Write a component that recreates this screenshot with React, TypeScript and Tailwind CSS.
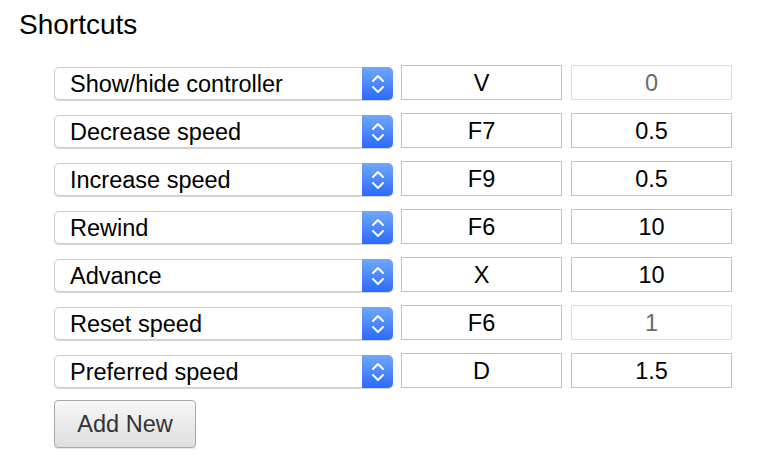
import React from 'react'

const rows = [
  { action: 'Show/hide controller', key: 'V', value: '0', disabled: true },
  { action: 'Decrease speed', key: 'F7', value: '0.5', disabled: false },
  { action: 'Increase speed', key: 'F9', value: '0.5', disabled: false },
  { action: 'Rewind', key: 'F6', value: '10', disabled: false },
  { action: 'Advance', key: 'X', value: '10', disabled: false },
  { action: 'Reset speed', key: 'F6', value: '1', disabled: true },
  { action: 'Preferred speed', key: 'D', value: '1.5', disabled: false },
]

function Chevrons() {
  return (
    <svg width="14" height="22" viewBox="0 0 14 22" fill="none">
      <path d="M2 8L7 3L12 8" stroke="white" strokeWidth="1.9" strokeLinecap="round" strokeLinejoin="round" />
      <path d="M2 14L7 19L12 14" stroke="white" strokeWidth="1.9" strokeLinecap="round" strokeLinejoin="round" />
    </svg>
  )
}

function Select({ label }: { label: string }) {
  return (
    <div className="flex h-[33px] w-[339px] items-stretch rounded-[5px] border border-[#cfcfcf] bg-white shadow-[0_1px_1px_rgba(0,0,0,0.18)]">
      <div className="flex flex-1 items-center pl-[15px] pt-[2px] text-[23.5px] text-black">{label}</div>
      <div className="-my-px -mr-px flex w-[31px] items-center justify-center rounded-r-[5px] bg-gradient-to-b from-[#72a6fb] to-[#2a69f5]">
        <Chevrons />
      </div>
    </div>
  )
}

function Field({ value, disabled }: { value: string; disabled?: boolean }) {
  return (
    <div
      className={
        disabled
          ? 'flex h-[35px] w-[161px] items-center justify-center border border-[#dedede] bg-white pt-[2px] text-[23.5px] text-[#6b6b6b]'
          : 'flex h-[35px] w-[161px] items-center justify-center border border-[#c2c2c2] bg-white pt-[2px] text-[23.5px] text-black'
      }
    >
      {value}
    </div>
  )
}

export default function App() {
  return (
    <div className="min-h-[474px] w-[768px] bg-white pl-[19px] pt-[10px]" style={{ fontFamily: '"Liberation Sans", Arial, sans-serif' }}>
      <h1 className="text-[28px] leading-[30px] text-black">Shortcuts</h1>
      <div className="mt-[25px] flex flex-col gap-[13px] pl-[35px]">
        {rows.map((r) => (
          <div key={r.action} className="flex items-end">
            <Select label={r.action} />
            <div className="ml-[8px]">
              <Field value={r.key} />
            </div>
            <div className="ml-[9px]">
              <Field value={r.value} disabled={r.disabled} />
            </div>
          </div>
        ))}
      </div>
      <div className="pl-[35px] pt-[12px]">
        <button className="h-[48px] w-[142px] rounded-[4px] border border-[#a8a8a8] bg-gradient-to-b from-[#f7f7f7] to-[#dedede] pt-[2px] text-[23.5px] text-[#333] shadow-[0_1px_1px_rgba(0,0,0,0.1)]">
          Add New
        </button>
      </div>
    </div>
  )
}
